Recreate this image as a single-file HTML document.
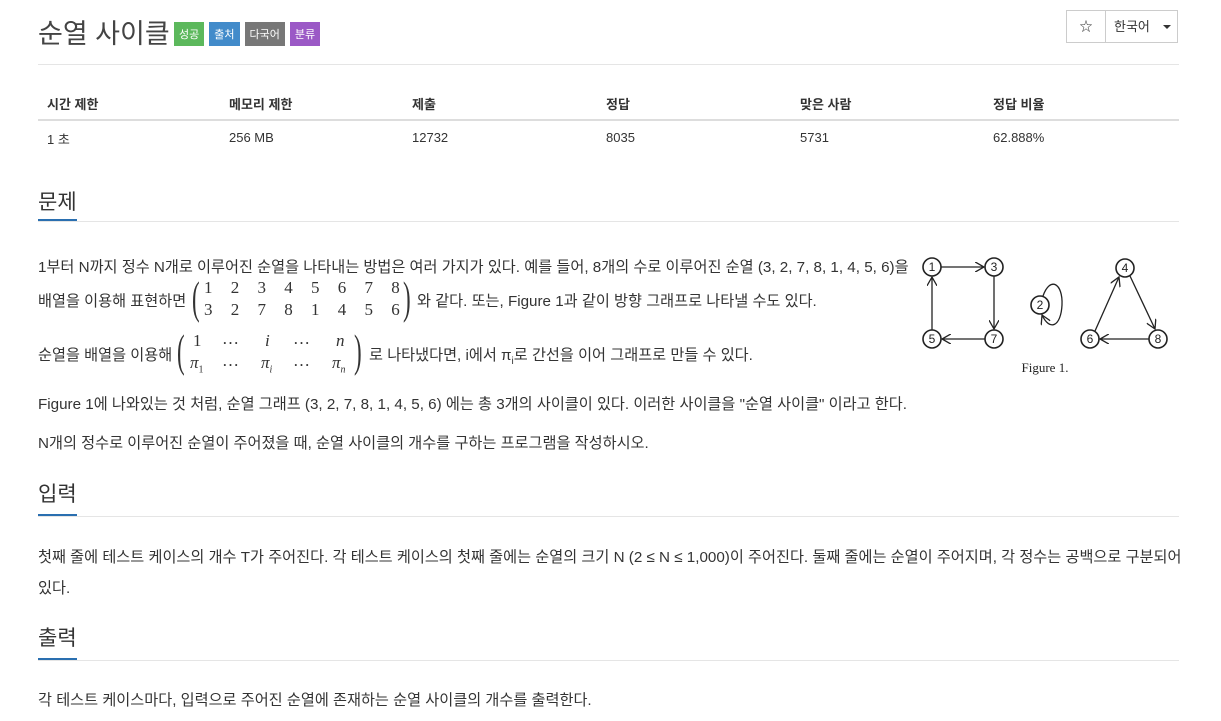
<!DOCTYPE html>
<html><head><meta charset="utf-8"><style>
body{margin:0;background:#fff;font-family:"Liberation Sans","Noto Sans CJK KR",sans-serif;color:#333;width:1221px;height:721px;overflow:hidden;position:relative}
.a{position:absolute;white-space:nowrap}
.t{font-size:15.2px}
.badge{display:inline-block;color:#fff;font-size:11px;padding:4px 5px;margin-right:5px;vertical-align:middle}
.hr{position:absolute;left:38px;width:1141px;height:1px;background:#e5e5e5}
.h{font-size:21px;color:#333}
.u{position:absolute;left:38px;width:39px;height:2px;background:#2a6fb0}
.th{font-size:13px;font-weight:bold}
.td{font-size:13px}
.m{font-family:"Liberation Serif",serif;font-size:17px}
</style></head><body>
<div class="a" style="left:38px;top:12px;font-size:27px;color:#444">순열 사이클</div>
<div class="a" style="left:174px;top:22px"><span class="badge" style="background:#5cb85c">성공</span><span class="badge" style="background:#428bca">출처</span><span class="badge" style="background:#777">다국어</span><span class="badge" style="background:#9b59c6">분류</span></div>
<div class="a" style="left:1066px;top:10px;width:112px;height:33px;border:1px solid #ccc;box-sizing:border-box;font-size:13px">
<div class="a" style="left:0;top:0;width:38px;height:31px;border-right:1px solid #ccc;text-align:center;line-height:31px">☆</div>
<div class="a" style="left:47px;top:0;line-height:31px">한국어</div>
<div class="a" style="left:96px;top:14px;width:0;height:0;border-left:4px solid transparent;border-right:4px solid transparent;border-top:4px solid #333"></div>
</div>
<div class="hr" style="top:64px"></div>
<div class="a th" style="left:47px;top:94px">시간 제한</div>
<div class="a th" style="left:229px;top:94px">메모리 제한</div>
<div class="a th" style="left:412px;top:94px">제출</div>
<div class="a th" style="left:606px;top:94px">정답</div>
<div class="a th" style="left:800px;top:94px">맞은 사람</div>
<div class="a th" style="left:993px;top:94px">정답 비율</div>
<div class="hr" style="top:119px;background:#ddd;height:2px"></div>
<div class="a td" style="left:47px;top:129px">1 초</div>
<div class="a td" style="left:229px;top:130px">256 MB</div>
<div class="a td" style="left:412px;top:130px">12732</div>
<div class="a td" style="left:606px;top:130px">8035</div>
<div class="a td" style="left:800px;top:130px">5731</div>
<div class="a td" style="left:993px;top:130px">62.888%</div>

<div class="a h" style="left:38px;top:186px">문제</div>
<div class="hr" style="top:221px"></div><div class="u" style="top:219px"></div>
<div class="a t" style="left:38px;top:255px">1부터 N까지 정수 N개로 이루어진 순열을 나타내는 방법은 여러 가지가 있다. 예를 들어, 8개의 수로 이루어진 순열 (3, 2, 7, 8, 1, 4, 5, 6)을</div>
<div class="a t" style="left:38px;top:289px">배열을 이용해 표현하면</div>
<div class="a" style="left:192px;top:271px;font-family:'Liberation Serif',serif;font-size:46px;transform:scaleX(0.5);transform-origin:left">(</div>
<div class="a m" style="left:204px;top:278px;word-spacing:14px">1 2 3 4 5 6 7 8</div>
<div class="a m" style="left:204px;top:300px;word-spacing:14px">3 2 7 8 1 4 5 6</div>
<div class="a" style="left:403px;top:271px;font-family:'Liberation Serif',serif;font-size:46px;transform:scaleX(0.5);transform-origin:left">)</div>
<div class="a t" style="left:417px;top:289px">와 같다. 또는, Figure 1과 같이 방향 그래프로 나타낼 수도 있다.</div>
<div class="a t" style="left:38px;top:343px">순열을 배열을 이용해</div>
<div class="a" style="left:177px;top:324px;font-family:'Liberation Serif',serif;font-size:46px;transform:scaleX(0.5);transform-origin:left">(</div>
<div class="a m" style="left:193px;top:331px">1</div><div class="a m" style="left:222px;top:329px">…</div><div class="a m" style="left:265px;top:331px;font-style:italic">i</div><div class="a m" style="left:293px;top:329px">…</div><div class="a m" style="left:336px;top:331px;font-style:italic">n</div>
<div class="a m" style="left:190px;top:353px;font-style:italic">π<sub style="font-size:10px;font-style:normal">1</sub></div><div class="a m" style="left:222px;top:351px">…</div><div class="a m" style="left:261px;top:353px;font-style:italic">π<sub style="font-size:10px">i</sub></div><div class="a m" style="left:293px;top:351px">…</div><div class="a m" style="left:332px;top:353px;font-style:italic">π<sub style="font-size:10px">n</sub></div>
<div class="a" style="left:354px;top:324px;font-family:'Liberation Serif',serif;font-size:46px;transform:scaleX(0.5);transform-origin:left">)</div>
<div class="a t" style="left:369px;top:343px">로 나타냈다면, i에서 π<sub style="font-size:10px">i</sub>로 간선을 이어 그래프로 만들 수 있다.</div>
<div class="a t" style="left:38px;top:392px">Figure 1에 나와있는 것 처럼, 순열 그래프 (3, 2, 7, 8, 1, 4, 5, 6) 에는 총 3개의 사이클이 있다. 이러한 사이클을 "순열 사이클" 이라고 한다.</div>
<div class="a t" style="left:38px;top:431px">N개의 정수로 이루어진 순열이 주어졌을 때, 순열 사이클의 개수를 구하는 프로그램을 작성하시오.</div>

<svg class="a" style="left:910px;top:250px" width="270" height="130" viewBox="910 250 270 130">
<defs><marker id="ar" markerWidth="8" markerHeight="8" refX="7" refY="4" orient="auto"><path d="M0,0 L7,4 L0,8" fill="none" stroke="#222" stroke-width="1"/></marker></defs>
<g stroke="#222" stroke-width="1.3" fill="none">
<line x1="941" y1="267" x2="984" y2="267" marker-end="url(#ar)"/>
<line x1="994" y1="276" x2="994" y2="329" marker-end="url(#ar)"/>
<line x1="985" y1="339" x2="942" y2="339" marker-end="url(#ar)"/>
<line x1="932" y1="330" x2="932" y2="277" marker-end="url(#ar)"/>
<path d="M1043,296 C1050,276 1063,283 1062,305 C1061,326 1050,332 1042,315" marker-end="url(#ar)"/>
<line x1="1095" y1="331" x2="1119" y2="277" marker-end="url(#ar)"/>
<line x1="1130" y1="276" x2="1155" y2="329" marker-end="url(#ar)"/>
<line x1="1149" y1="339" x2="1100" y2="339" marker-end="url(#ar)"/>
<g stroke-width="1.6" fill="#fff">
<circle cx="932" cy="267" r="9"/><circle cx="994" cy="267" r="9"/><circle cx="932" cy="339" r="9"/><circle cx="994" cy="339" r="9"/>
<circle cx="1040" cy="305" r="9"/><circle cx="1125" cy="268" r="9"/><circle cx="1090" cy="339" r="9"/><circle cx="1158" cy="339" r="9"/></g></g>
<g font-family="Liberation Sans,sans-serif" font-size="12" text-anchor="middle" fill="#222">
<text x="932" y="271">1</text><text x="994" y="271">3</text><text x="932" y="343">5</text><text x="994" y="343">7</text><text x="1040" y="309">2</text><text x="1125" y="272">4</text><text x="1090" y="343">6</text><text x="1158" y="343">8</text></g>
<text x="1045" y="372" font-family="Liberation Serif,serif" font-size="13" text-anchor="middle" fill="#222">Figure 1.</text>
</svg>

<div class="a h" style="left:38px;top:478px">입력</div>
<div class="hr" style="top:516px"></div><div class="u" style="top:514px"></div>
<div class="a t" style="left:38px;top:545px">첫째 줄에 테스트 케이스의 개수 T가 주어진다. 각 테스트 케이스의 첫째 줄에는 순열의 크기 N (2 ≤ N ≤ 1,000)이 주어진다. 둘째 줄에는 순열이 주어지며, 각 정수는 공백으로 구분되어</div>
<div class="a t" style="left:38px;top:576px">있다.</div>
<div class="a h" style="left:38px;top:622px">출력</div>
<div class="hr" style="top:660px"></div><div class="u" style="top:658px"></div>
<div class="a t" style="left:38px;top:688px">각 테스트 케이스마다, 입력으로 주어진 순열에 존재하는 순열 사이클의 개수를 출력한다.</div>
</body></html>
